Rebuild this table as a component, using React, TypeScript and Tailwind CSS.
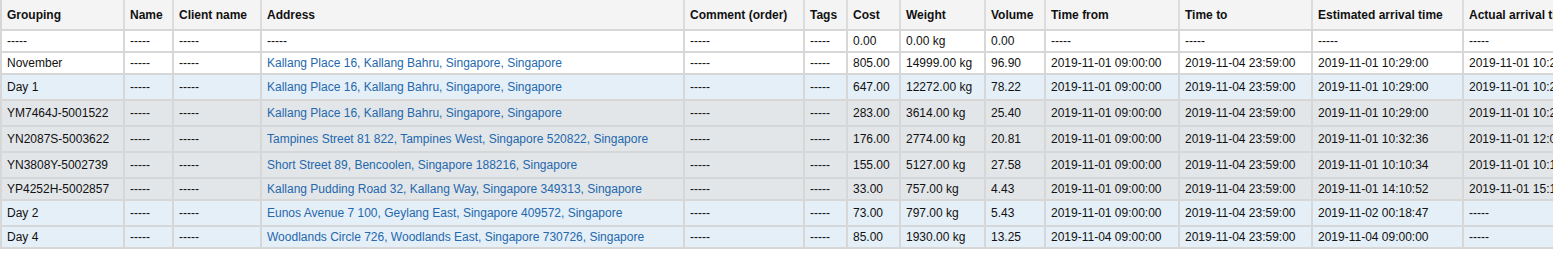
import React from 'react';

type Kind = 'plain' | 'day' | 'order';

interface Row {
  kind: Kind;
  h: string;
  cells: string[];
}

const columns = [
  { label: 'Grouping', w: 'w-[123px]' },
  { label: 'Name', w: 'w-[49px]' },
  { label: 'Client name', w: 'w-[88px]' },
  { label: 'Address', w: 'w-[423px]' },
  { label: 'Comment (order)', w: 'w-[120px]' },
  { label: 'Tags', w: 'w-[43px]' },
  { label: 'Cost', w: 'w-[53px]' },
  { label: 'Weight', w: 'w-[85px]' },
  { label: 'Volume', w: 'w-[60px]' },
  { label: 'Time from', w: 'w-[134px]' },
  { label: 'Time to', w: 'w-[133px]' },
  { label: 'Estimated arrival time', w: 'w-[151px]' },
  { label: 'Actual arrival time', w: 'w-[160px]' },
];

const D = '-----';

const rows: Row[] = [
  { kind: 'plain', h: 'h-[22px]', cells: [D, D, D, D, D, D, '0.00', '0.00 kg', '0.00', D, D, D, D] },
  {
    kind: 'plain',
    h: 'h-[22px]',
    cells: ['November', D, D, 'Kallang Place 16, Kallang Bahru, Singapore, Singapore', D, D, '805.00', '14999.00 kg', '96.90', '2019-11-01 09:00:00', '2019-11-04 23:59:00', '2019-11-01 10:29:00', '2019-11-01 10:29:00'],
  },
  {
    kind: 'day',
    h: 'h-[26px]',
    cells: ['Day 1', D, D, 'Kallang Place 16, Kallang Bahru, Singapore, Singapore', D, D, '647.00', '12272.00 kg', '78.22', '2019-11-01 09:00:00', '2019-11-04 23:59:00', '2019-11-01 10:29:00', '2019-11-01 10:29:00'],
  },
  {
    kind: 'order',
    h: 'h-[26px]',
    cells: ['YM7464J-5001522', D, D, 'Kallang Place 16, Kallang Bahru, Singapore, Singapore', D, D, '283.00', '3614.00 kg', '25.40', '2019-11-01 09:00:00', '2019-11-04 23:59:00', '2019-11-01 10:29:00', '2019-11-01 10:29:00'],
  },
  {
    kind: 'order',
    h: 'h-[26px]',
    cells: ['YN2087S-5003622', D, D, 'Tampines Street 81 822, Tampines West, Singapore 520822, Singapore', D, D, '176.00', '2774.00 kg', '20.81', '2019-11-01 09:00:00', '2019-11-04 23:59:00', '2019-11-01 10:32:36', '2019-11-01 12:05:00'],
  },
  {
    kind: 'order',
    h: 'h-[26px]',
    cells: ['YN3808Y-5002739', D, D, 'Short Street 89, Bencoolen, Singapore 188216, Singapore', D, D, '155.00', '5127.00 kg', '27.58', '2019-11-01 09:00:00', '2019-11-04 23:59:00', '2019-11-01 10:10:34', '2019-11-01 10:10:34'],
  },
  {
    kind: 'order',
    h: 'h-[22px]',
    cells: ['YP4252H-5002857', D, D, 'Kallang Pudding Road 32, Kallang Way, Singapore 349313, Singapore', D, D, '33.00', '757.00 kg', '4.43', '2019-11-01 09:00:00', '2019-11-04 23:59:00', '2019-11-01 14:10:52', '2019-11-01 15:10:52'],
  },
  {
    kind: 'day',
    h: 'h-[26px]',
    cells: ['Day 2', D, D, 'Eunos Avenue 7 100, Geylang East, Singapore 409572, Singapore', D, D, '73.00', '797.00 kg', '5.43', '2019-11-01 09:00:00', '2019-11-04 23:59:00', '2019-11-02 00:18:47', D],
  },
  {
    kind: 'day',
    h: 'h-[22px]',
    cells: ['Day 4', D, D, 'Woodlands Circle 726, Woodlands East, Singapore 730726, Singapore', D, D, '85.00', '1930.00 kg', '13.25', '2019-11-04 09:00:00', '2019-11-04 23:59:00', '2019-11-04 09:00:00', D],
  },
];

const rowBg: Record<Kind, string> = {
  plain: 'bg-white',
  day: 'bg-[#e4eff7]',
  order: 'bg-[#e2e6e9]',
};

export default function App() {
  return (
    <div className="w-[1553px] h-[272px] overflow-hidden bg-white font-['Liberation_Sans',Arial,sans-serif] text-[12px] text-[#111]">
      <div className="w-max">
        <div className="flex h-[31px] bg-[#f4f4f4] border-l-2 border-b-2 border-[#d7d7d7] font-bold">
          {columns.map((c) => (
            <div
              key={c.label}
              className={`${c.w} shrink-0 flex items-center pl-[5px] border-r-2 border-[#dcdcdc] whitespace-nowrap overflow-hidden`}
            >
              {c.label}
            </div>
          ))}
        </div>
        {rows.map((r, i) => (
          <div key={i} className={`flex ${r.h} ${rowBg[r.kind]} border-l-2 border-b-2 border-[#d7d7d7]`}>
            {r.cells.map((v, j) => (
              <div
                key={j}
                className={`${columns[j].w} shrink-0 flex items-center pl-[5px] border-r-2 border-[#d7d7d7] whitespace-nowrap overflow-hidden ${
                  j === 3 && v !== D ? 'text-[#2468ad]' : ''
                }`}
              >
                {v}
              </div>
            ))}
          </div>
        ))}
      </div>
    </div>
  );
}
